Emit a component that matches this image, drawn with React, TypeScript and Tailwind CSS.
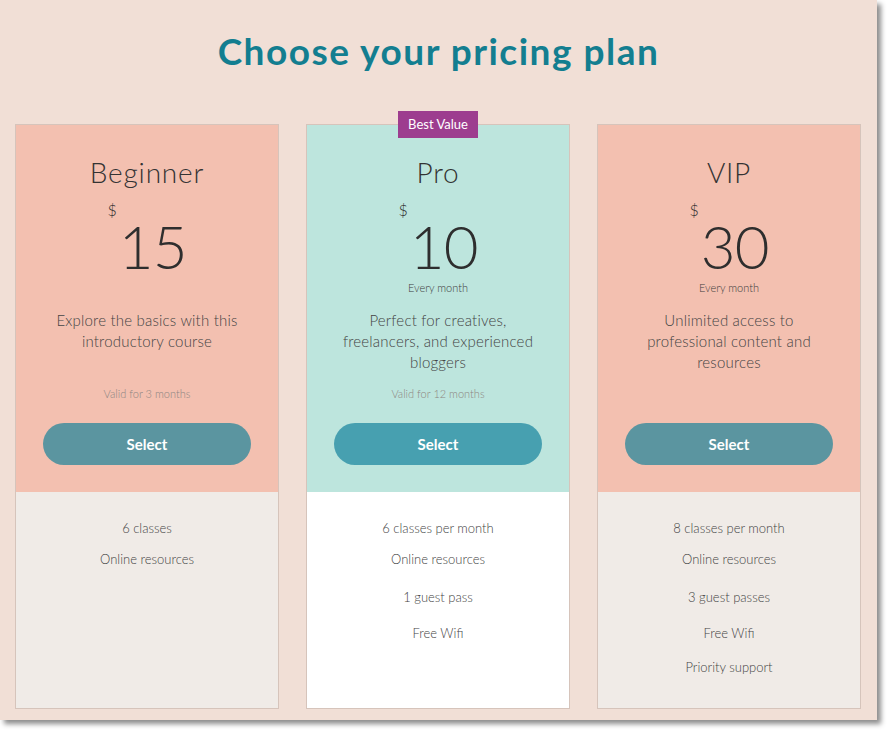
import type { ReactNode } from "react";

interface Plan {
  name: string;
  price: string;
  perMonth: boolean;
  description: string[];
  validity?: string;
  features: string[];
  topBg: string;
  bottomBg: string;
  buttonBg: string;
  badge?: string;
}

const PLANS: Plan[] = [
  {
    name: "Beginner",
    price: "15",
    perMonth: false,
    description: ["Explore the basics with this", "introductory course"],
    validity: "Valid for 3 months",
    features: ["6 classes", "Online resources"],
    topBg: "bg-[#f3c0b0]",
    bottomBg: "bg-[#f0ebe7]",
    buttonBg: "bg-[#5b95a0]",
  },
  {
    name: "Pro",
    price: "10",
    perMonth: true,
    description: ["Perfect for creatives,", "freelancers, and experienced", "bloggers"],
    validity: "Valid for 12 months",
    features: ["6 classes per month", "Online resources", "1 guest pass", "Free Wifi"],
    topBg: "bg-[#bde5dd]",
    bottomBg: "bg-white",
    buttonBg: "bg-[#47a0b0]",
    badge: "Best Value",
  },
  {
    name: "VIP",
    price: "30",
    perMonth: true,
    description: ["Unlimited access to", "professional content and", "resources"],
    features: [
      "8 classes per month",
      "Online resources",
      "3 guest passes",
      "Free Wifi",
      "Priority support",
    ],
    topBg: "bg-[#f3c0b0]",
    bottomBg: "bg-[#f0ebe7]",
    buttonBg: "bg-[#5b95a0]",
  },
];

// spacing between feature rows is not even in the original
const FEATURE_GAPS = ["mt-0", "mt-[11px]", "mt-[18px]", "mt-[16px]", "mt-[14px]"];

const Badge = ({ children }: { children: ReactNode }) => (
  <div className="absolute -top-[14px] left-1/2 -translate-x-1/2 w-[80px] h-[27px] bg-[#9d3d8f] text-white text-[13px] leading-[27px] text-center">
    {children}
  </div>
);

const PlanCard = ({ plan }: { plan: Plan }) => (
  <div className="relative border border-[#d6c4bb] flex flex-col h-[585px]">
    {plan.badge && <Badge>{plan.badge}</Badge>}

    <div className={`${plan.topBg} h-[367px] flex flex-col items-center pt-[30px]`}>
      <h2 className="text-[28px] leading-[34px] font-light tracking-[0.8px] text-[#333]">
        {plan.name}
      </h2>

      <div className="flex items-start mt-[11px] h-[78px] text-[#2e2e2e]">
        <span className="text-[16px] leading-[20px] font-light mr-[2px]">$</span>
        <span className="text-[60px] leading-[60px] font-light mt-[16px] tracking-[-1px]">
          {plan.price}
        </span>
      </div>

      <div className="h-[14px] mt-[3px] text-[11px] leading-[14px] font-light text-[#3d3d3d]">
        {plan.perMonth ? "Every month" : ""}
      </div>

      <div className="h-[63px] mt-[15px] text-[15px] leading-[21px] font-light text-[#444] text-center tracking-[0.2px]">
        {plan.description.map((line) => (
          <div key={line}>{line}</div>
        ))}
      </div>

      <div className="h-[14px] mt-[14px] text-[11px] leading-[14px] font-light text-[#8d8582]">
        {plan.validity ?? ""}
      </div>

      <button
        className={`${plan.buttonBg} mt-[22px] w-[208px] h-[42px] rounded-full text-white text-[15px] font-bold`}
      >
        Select
      </button>
    </div>

    <div className={`${plan.bottomBg} flex-1 flex flex-col items-center pt-[26px]`}>
      {plan.features.map((feature, i) => (
        <div
          key={feature}
          className={`${FEATURE_GAPS[i]} text-[13px] leading-[20px] font-light text-[#444]`}
        >
          {feature}
        </div>
      ))}
    </div>
  </div>
);

const App = () => {
  return (
    <div className="w-[893px] h-[735px] bg-white font-['Lato','Open_Sans',sans-serif]">
      <div className="w-[877px] h-[720px] bg-[#f1dfd6] shadow-[4px_4px_5px_rgba(0,0,0,0.45)] flex flex-col">
        <h1 className="pt-[29px] text-center text-[37px] leading-[44px] font-bold tracking-[1.5px] text-[#137e90]">
          Choose your pricing plan
        </h1>

        <div className="grid grid-cols-[264px_264px_264px] gap-[27px] px-[15px] mt-[51px]">
          {PLANS.map((plan) => (
            <PlanCard key={plan.name} plan={plan} />
          ))}
        </div>
      </div>
    </div>
  );
};

export default App;
